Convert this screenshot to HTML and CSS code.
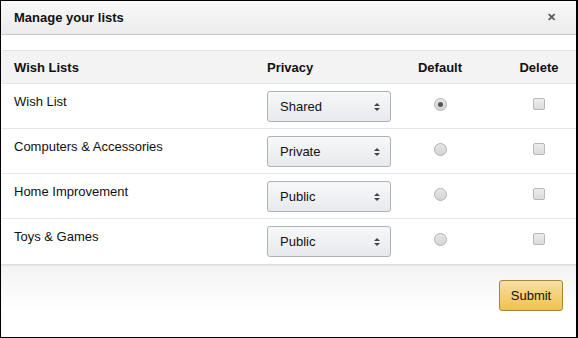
FILE: index.html
```html
<!DOCTYPE html>
<html lang="en">
<head>
    <meta charset="UTF-8">
    <title>Manage your lists</title>
    <link rel="stylesheet" href="styles.css">
</head>
<body>
    <div class="modal">
        <!-- Header -->
        <div class="modal-header">
            <h1>Manage your lists</h1>
            <span class="close">&#x2715;</span>
        </div>

        <!-- Lists -->
        <div class="modal-body">
            <table class="lists">
                <thead>
                    <tr><th class="col-name">Wish Lists</th><th class="col-privacy">Privacy</th><th class="col-default">Default</th><th class="col-delete">Delete</th></tr>
                </thead>
                <tbody>
                    <tr>
                        <td class="col-name">Wish List</td>
                        <td class="col-privacy"><div class="select">Shared<span class="arrows"></span></div></td>
                        <td class="col-default"><span class="radio checked"></span></td>
                        <td class="col-delete"><span class="check"></span></td>
                    </tr>
                    <tr>
                        <td class="col-name">Computers &amp; Accessories</td>
                        <td class="col-privacy"><div class="select">Private<span class="arrows"></span></div></td>
                        <td class="col-default"><span class="radio"></span></td>
                        <td class="col-delete"><span class="check"></span></td>
                    </tr>
                    <tr>
                        <td class="col-name">Home Improvement</td>
                        <td class="col-privacy"><div class="select">Public<span class="arrows"></span></div></td>
                        <td class="col-default"><span class="radio"></span></td>
                        <td class="col-delete"><span class="check"></span></td>
                    </tr>
                    <tr>
                        <td class="col-name">Toys &amp; Games</td>
                        <td class="col-privacy"><div class="select">Public<span class="arrows"></span></div></td>
                        <td class="col-default"><span class="radio"></span></td>
                        <td class="col-delete"><span class="check"></span></td>
                    </tr>
                </tbody>
            </table>
        </div>

        <!-- Footer -->
        <div class="modal-footer">
            <button class="submit">Submit</button>
        </div>
    </div>
</body>
</html>
```

FILE: styles.css
```css
* { margin: 0; padding: 0; box-sizing: border-box; font-family: 'Liberation Sans', Arial, sans-serif; }
body { background: #fff; color: #111; font-size: 13px; }
.modal { width: 578px; height: 338px; border: 1px solid #000; border-right-width: 2px; display: flex; flex-direction: column; background: #fff; }
.modal-header { height: 34px; display: flex; align-items: center; justify-content: space-between; padding: 0 20px 1px 13px; background: linear-gradient(#f8f8f8, #ececec); border-bottom: 1px solid #c8c8c8; }
.modal-header h1 { font-size: 13px; font-weight: bold; color: #111; }
.close { font-size: 11px; font-weight: bold; color: #555; }
.modal-body { padding-top: 15px; }
.lists { width: 100%; border-collapse: collapse; }
.lists th { height: 33px; background: #f3f3f3; font-weight: bold; text-align: left; border-top: 1px solid #e4e4e4; border-bottom: 1px solid #e4e4e4; vertical-align: middle; }
.lists td { height: 45px; border-bottom: 1px solid #e7e7e7; vertical-align: top; padding-top: 10px; color: #111; }
.lists tbody tr:last-child td { border-bottom: none; }
.col-name { padding-left: 13px; width: 266px; }
.col-privacy { width: 123px; }
.lists td.col-privacy { padding-top: 7px; }
.col-default, .col-delete { text-align: center; }
.lists th.col-default, .lists th.col-delete { text-align: center; }
.col-default { width: 98px; }
.lists .col-delete { padding-left: 13px; }
.lists th.col-privacy { text-align: left; }
.select { position: relative; width: 124px; height: 31px; line-height: 29px; padding-left: 12px; border: 1px solid #adb1b8; border-radius: 3px; background: linear-gradient(#f7f8fa, #e7e9ec); color: #111; }
.arrows { position: absolute; right: 10px; top: 11px; width: 6px; height: 8px; }
.arrows::before, .arrows::after { content: ''; position: absolute; left: 0; border-left: 3px solid transparent; border-right: 3px solid transparent; }
.arrows::before { top: 0; border-bottom: 3px solid #444; }
.arrows::after { bottom: 0; border-top: 3px solid #444; }
.radio { display: inline-block; width: 13px; height: 13px; margin-top: 4px; border-radius: 50%; border: 1px solid #b4b4b4; background: linear-gradient(#e6e6e6, #d4d4d4); position: relative; }
.radio.checked::after { content: ''; position: absolute; left: 3px; top: 3px; width: 5px; height: 5px; border-radius: 50%; background: #555; }
.check { display: inline-block; width: 12px; height: 12px; margin-top: 4px; border-radius: 2px; border: 1px solid #b8b8b8; background: linear-gradient(#ececec, #dcdcdc); }
.modal-footer { flex: 1; display: flex; justify-content: flex-end; align-items: flex-start; padding: 15px 13px 0 0; background: linear-gradient(#f3f3f3, #fff 45px); border-top: 1px solid #ddd; box-shadow: inset 0 1px 2px rgba(0,0,0,0.06); }
.submit { width: 64px; height: 31px; border: 1px solid #a88734; border-radius: 3px; background: linear-gradient(#f7dfa5, #f0c14b); font-size: 13px; color: #111; cursor: pointer; }
```
